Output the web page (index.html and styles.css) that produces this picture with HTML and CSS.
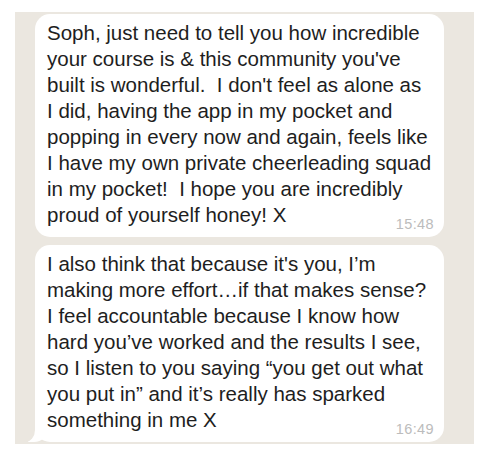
FILE: index.html
```html
<!DOCTYPE html>
<html lang="en">
<head>
<meta charset="utf-8">
<title>Chat</title>
<link rel="stylesheet" href="styles.css">
</head>
<body>
<div class="panel">
  <div class="bubble">
    <p class="msg">Soph, just need to tell you how incredible<br>your course is &amp; this community you've<br>built is wonderful.&nbsp; I don't feel as alone as<br>I did, having the app in my pocket and<br>popping in every now and again, feels like<br>I have my own private cheerleading squad<br>in my pocket!&nbsp; I hope you are incredibly<br>proud of yourself honey! X</p>
    <div class="time">15:48</div>
  </div>
  <div class="bubble tail">
    <p class="msg">I also think that because it's you, I’m<br>making more effort…if that makes sense?<br>I feel accountable because I know how<br>hard you’ve worked and the results I see,<br>so I listen to you saying “you get out what<br>you put in” and it’s really has sparked<br>something in me X</p>
    <div class="time">16:49</div>
  </div>
</div>
</body>
</html>
```

FILE: styles.css
```css
html, body {
  margin: 0;
  padding: 0;
  background: #ffffff;
}

body {
  width: 484px;
  height: 460px;
  overflow: hidden;
  font-family: "Liberation Sans", Arial, sans-serif;
}

.panel {
  margin: 12px 10px 0 15px;
  width: 459px;
  height: 432px;
  box-sizing: border-box;
  padding: 2px 30px 0 20px;
  background: #ebe7e0;
  display: flex;
  flex-direction: column;
  gap: 8px;
}

.bubble {
  position: relative;
  background: #ffffff;
  border-radius: 15px;
  padding: 6px 10px 5px 12px;
  display: flex;
  flex-direction: column;
}

.msg {
  margin: 0;
  font-size: 20.5px;
  line-height: 26px;
  color: #1e1e1e;
  white-space: nowrap;
}

.time {
  align-self: flex-end;
  margin-top: -12px;
  font-size: 14.5px;
  line-height: 16px;
  color: #bcbcbc;
  letter-spacing: 0.4px;
}

.tail::before {
  content: "";
  position: absolute;
  left: -7px;
  bottom: 0;
  width: 20px;
  height: 16px;
  background: #ffffff;
  border-bottom-right-radius: 14px 14px;
}

.tail::after {
  content: "";
  position: absolute;
  left: -12px;
  bottom: 0;
  width: 12px;
  height: 18px;
  background: #ebe7e0;
  border-bottom-right-radius: 10px 12px;
}
```
